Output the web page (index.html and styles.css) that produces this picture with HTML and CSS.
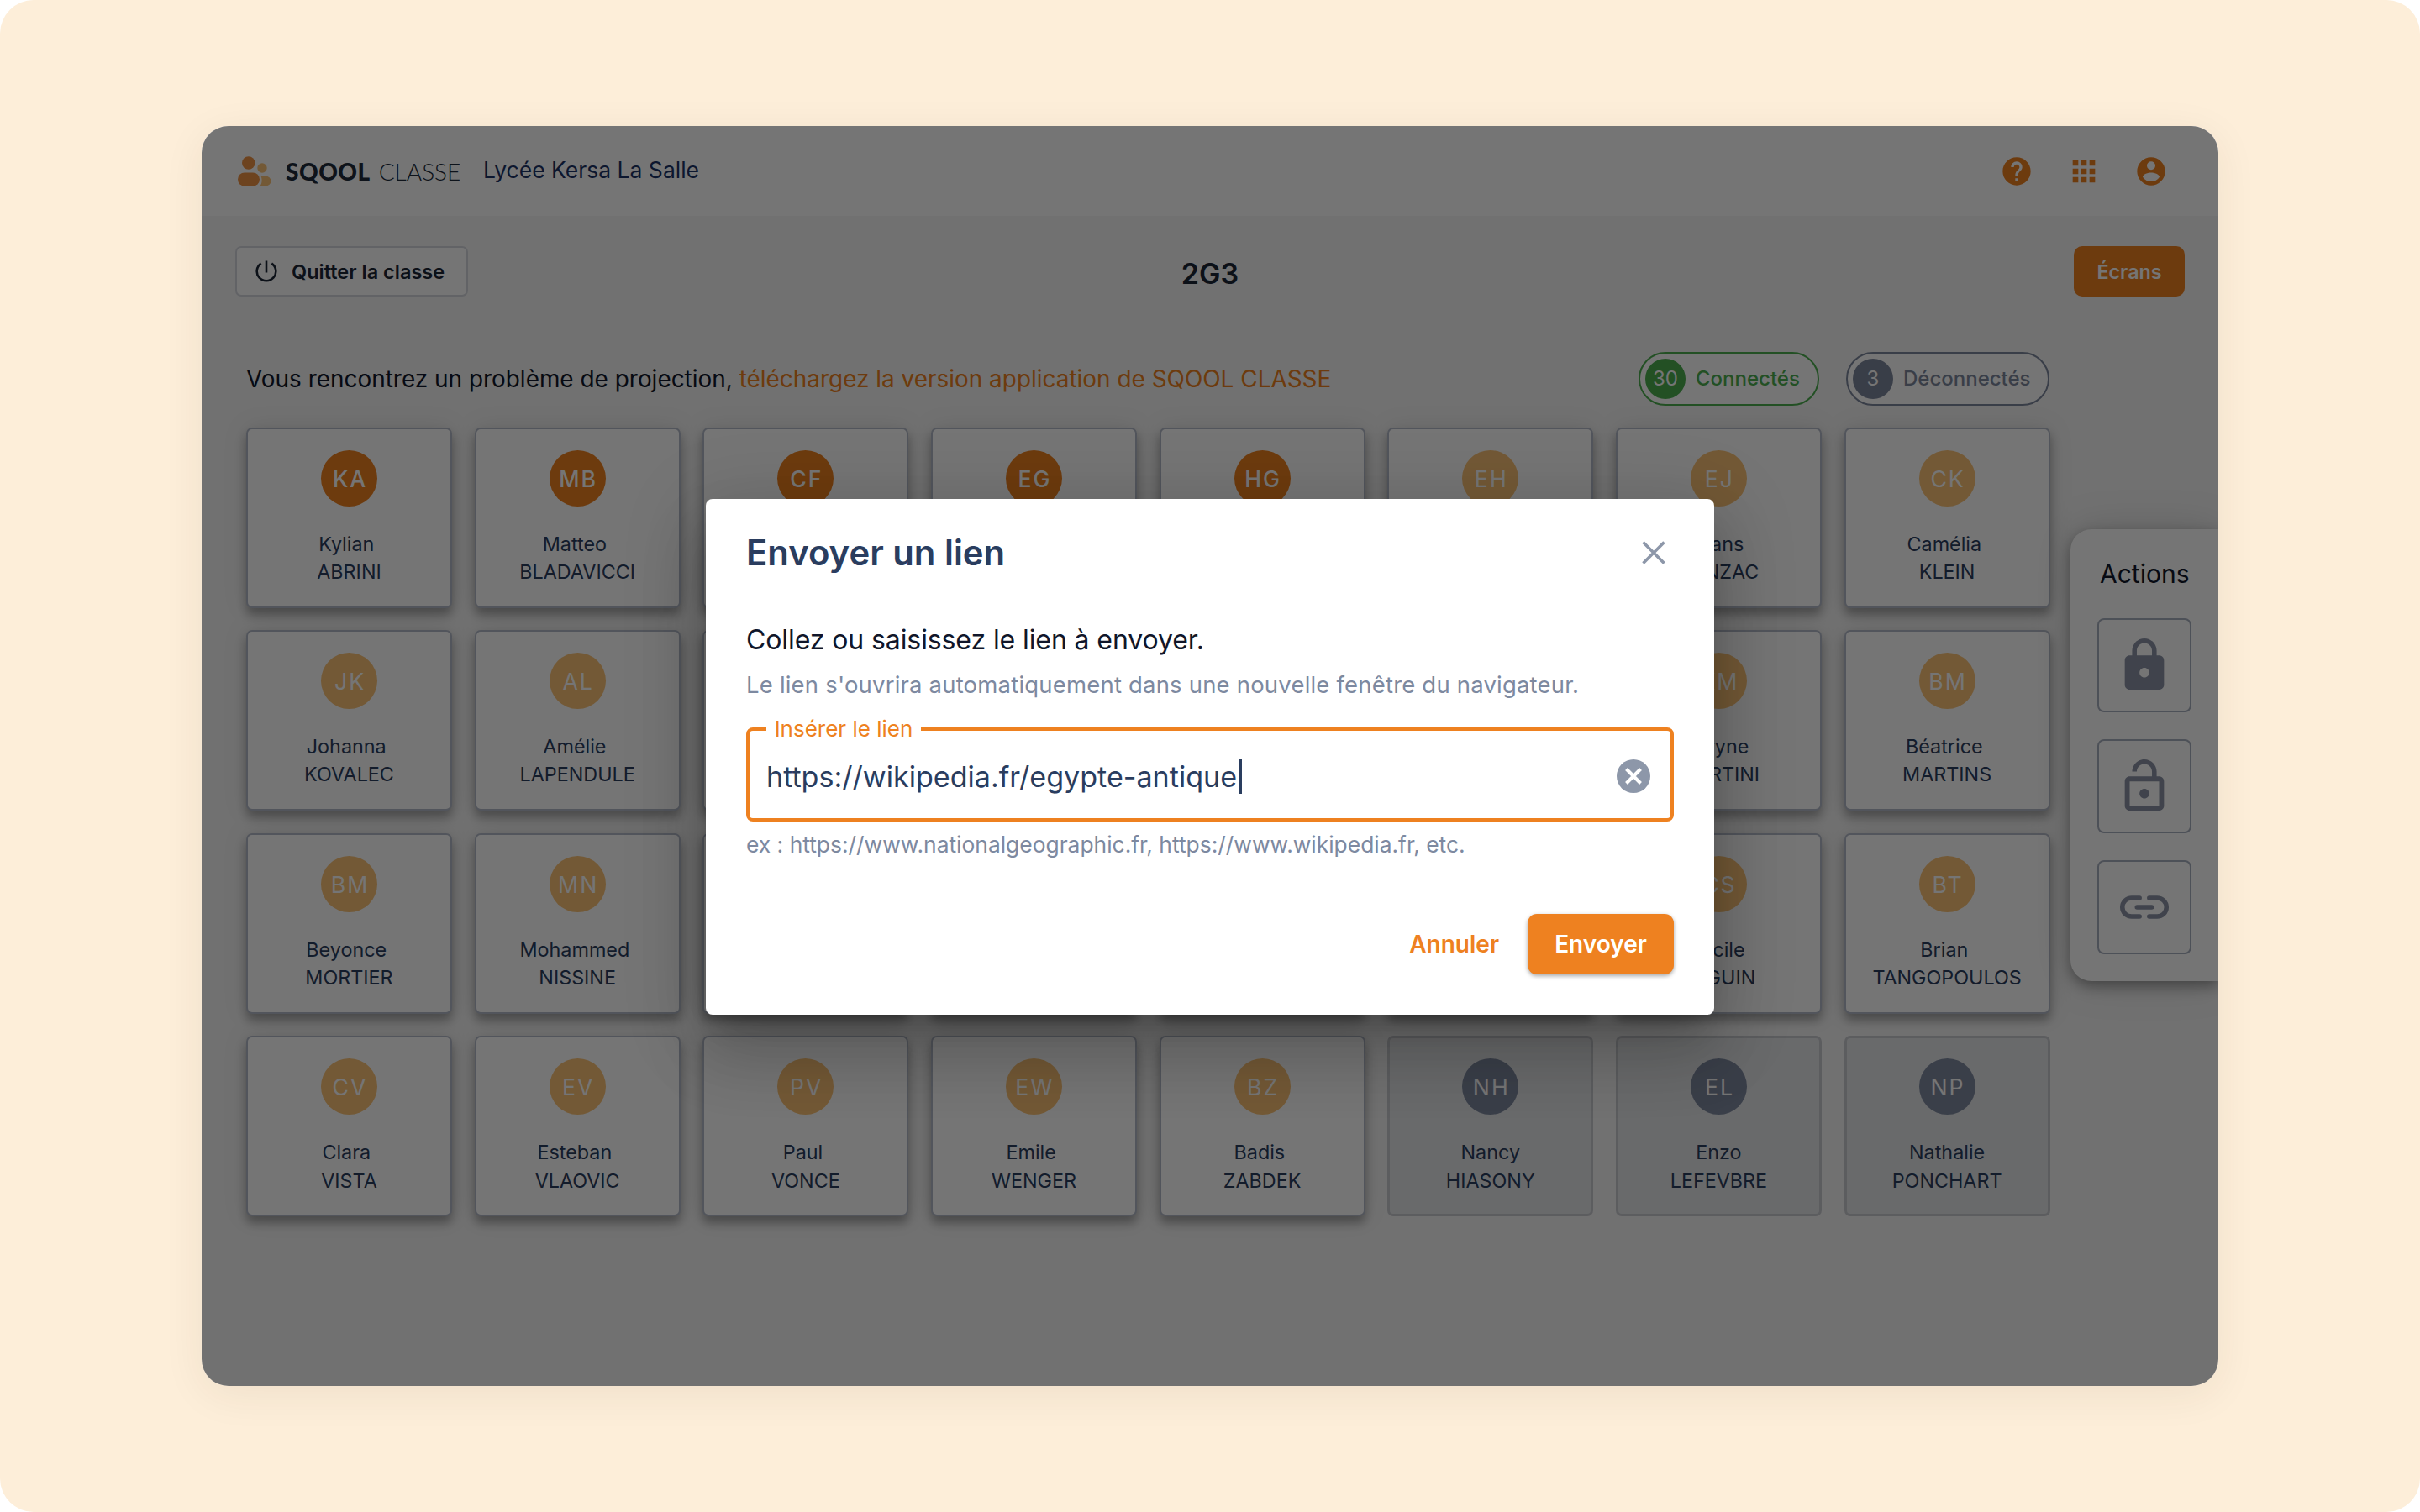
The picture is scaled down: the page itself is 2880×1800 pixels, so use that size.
FILE: index.html
```
<!DOCTYPE html>
<html lang="fr">
<head>
    <meta charset="UTF-8">
    <meta name="viewport" content="width=device-width, initial-scale=1.0">
    <title>SQOOL CLASSE</title>
    <link rel="stylesheet" href="styles.css">
</head>
<body>
    <div class="window">
        <header class="topbar">
            <svg class="logo-icon" viewBox="0 0 40 36">
                <circle cx="12.8" cy="8" r="7.8" fill="#ee9345"/>
                <circle cx="29" cy="14" r="5.7" fill="#fac276"/>
                <path d="M27.500 23.500H33a6.500 6 0 0 1 6.500 6a6.500 6 0 0 1-6.500 6H26.500c1.400-2 2.100-4 2.100-6.500c0-2-.4-4-1.100-5.500z" fill="#fac276"/>
                <rect x="0" y="19.500" width="26" height="16" rx="8" fill="#ee9345"/>
            </svg>
            <div class="logo-text"><b>SQOOL</b> <span>CLASSE</span></div>
            <div class="school">Lycée Kersa La Salle</div>
            <nav class="top-icons">
                <svg viewBox="0 0 24 24"><path d="M12 2C6.480 2 2 6.480 2 12s4.480 10 10 10 10-4.480 10-10S17.520 2 12 2zm1 17h-2v-2h2v2zm2.070-7.750l-.9.920C13.450 12.900 13 13.500 13 15h-2v-.5c0-1.100.45-2.100 1.170-2.830l1.240-1.260c.37-.36.59-.86.59-1.410 0-1.100-.9-2-2-2s-2 .9-2 2H8c0-2.210 1.790-4 4-4s4 1.790 4 4c0 .88-.36 1.680-.93 2.250z"/></svg>
                <svg viewBox="0 0 24 24"><path d="M4 8h4V4H4v4zm6 12h4v-4h-4v4zm-6 0h4v-4H4v4zm0-6h4v-4H4v4zm6 0h4v-4h-4v4zm6-10v4h4V4h-4zm-6 4h4V4h-4v4zm6 6h4v-4h-4v4zm0 6h4v-4h-4v4z"/></svg>
                <svg viewBox="0 0 24 24"><path fill-rule="evenodd" d="M12 2a10 10 0 1 0 0 20a10 10 0 1 0 0-20zM12 5a3 3 0 1 1 0 6a3 3 0 1 1 0-6zM12 19.200c-2.500 0-4.710-1.280-6-3.220.03-1.990 4-3.080 6-3.080s5.970 1.090 6 3.080c-1.290 1.940-3.500 3.220-6 3.220z"/></svg>
            </nav>
        </header>

        <div class="toolbar">
            <button class="btn-quit">
                <svg viewBox="0 0 26 26"><path d="M13 .5v14M6.700 3.600a11.300 11.300 0 1 0 12.600 0" fill="none" stroke="currentColor" stroke-width="2.600"/></svg>
                Quitter la classe
            </button>
            <h1>2G3</h1>
            <button class="btn-screens">Écrans</button>
        </div>

        <div class="content">
            <main class="students">
                <div class="info-row">
                    <p>Vous rencontrez un problème de projection, <a>téléchargez la version application de SQOOL CLASSE</a></p>
                    <div class="pill connected"><i>30</i><span>Connectés</span></div>
                    <div class="pill disconnected"><i>3</i><span>Déconnectés</span></div>
                </div>
                <div class="grid" id="grid"></div>
            </main>
            <aside class="actions">
                <h2>Actions</h2>
                <button>
                    <svg viewBox="0 0 24 24"><path fill-rule="evenodd" d="M18 8h-1V6c0-2.760-2.240-5-5-5S7 3.240 7 6v2H6c-1.100 0-2 .9-2 2v10c0 1.100.9 2 2 2h12c1.100 0 2-.9 2-2V10c0-1.100-.9-2-2-2zM12 17c-1.100 0-2-.9-2-2s.9-2 2-2 2 .9 2 2-.9 2-2 2zM8.900 8V6c0-1.710 1.390-3.100 3.100-3.100s3.100 1.390 3.100 3.100v2z"/></svg>
                </button>
                <button>
                    <svg viewBox="0 0 24 24"><path d="M12 17c1.100 0 2-.9 2-2s-.9-2-2-2-2 .9-2 2 .9 2 2 2zm6-9h-1V6c0-2.760-2.240-5-5-5S7 3.240 7 6h1.900c0-1.710 1.390-3.100 3.100-3.100 1.710 0 3.100 1.390 3.100 3.100v2H6c-1.100 0-2 .9-2 2v10c0 1.100.9 2 2 2h12c1.100 0 2-.9 2-2V10c0-1.100-.9-2-2-2zm0 12H6V10h12v10z"/></svg>
                </button>
                <button>
                    <svg viewBox="0 0 24 24"><path d="M10 8.200H6.800a3.800 3.800 0 0 0 0 7.600H10M14 8.200h3.200a3.800 3.800 0 0 1 0 7.600H14M9 12h6" fill="none" stroke="currentColor" stroke-width="1.900" stroke-linecap="round"/></svg>
                </button>
            </aside>
        </div>

        <div class="overlay">
            <div class="modal">
                <div class="modal-header">
                    <h2>Envoyer un lien</h2>
                    <svg class="close" viewBox="0 0 28 28"><path d="M1.500 1.500l25 25M26.500 1.500l-25 25" stroke="currentColor" stroke-width="3.600"/></svg>
                </div>
                <p class="lead">Collez ou saisissez le lien à envoyer.</p>
                <p class="hint">Le lien s'ouvrira automatiquement dans une nouvelle fenêtre du navigateur.</p>
                <div class="field">
                    <label>Insérer le lien</label>
                    <span class="value">https://wikipedia.fr/egypte-antique</span><span class="caret"></span>
                    <svg class="clear" viewBox="0 0 40 40"><circle cx="20" cy="20" r="20" fill="currentColor"/><path d="M11.500 11.500l17 17M28.500 11.500l-17 17" stroke="#fff" stroke-width="4"/></svg>
                </div>
                <p class="helper">ex : https://www.nationalgeographic.fr, https://www.wikipedia.fr, etc.</p>
                <div class="modal-footer">
                    <button class="btn-cancel">Annuler</button>
                    <button class="btn-send">Envoyer</button>
                </div>
            </div>
        </div>
    </div>
    <script>
        // [initials, first name, last name, state]
        const students = [
            ['KA', 'Kylian', 'ABRINI', 'active'],
            ['MB', 'Matteo', 'BLADAVICCI', 'active'],
            ['CF', '', '', 'active'],
            ['EG', '', '', 'active'],
            ['HG', '', '', 'active'],
            ['EH', '', '', ''],
            ['EJ', 'Evans', 'JONZAC', ''],
            ['CK', 'Camélia', 'KLEIN', ''],
            ['JK', 'Johanna', 'KOVALEC', ''],
            ['AL', 'Amélie', 'LAPENDULE', ''],
            ['', '', '', ''],
            ['', '', '', ''],
            ['', '', '', ''],
            ['', '', '', ''],
            ['KM', 'Karyne', 'MARTINI', ''],
            ['BM', 'Béatrice', 'MARTINS', ''],
            ['BM', 'Beyonce', 'MORTIER', ''],
            ['MN', 'Mohammed', 'NISSINE', ''],
            ['', '', '', ''],
            ['', '', '', ''],
            ['', '', '', ''],
            ['', '', '', ''],
            ['CS', 'Cécile', 'SEGUIN', ''],
            ['BT', 'Brian', 'TANGOPOULOS', ''],
            ['CV', 'Clara', 'VISTA', ''],
            ['EV', 'Esteban', 'VLAOVIC', ''],
            ['PV', 'Paul', 'VONCE', ''],
            ['EW', 'Emile', 'WENGER', ''],
            ['BZ', 'Badis', 'ZABDEK', ''],
            ['NH', 'Nancy', 'HIASONY', 'offline'],
            ['EL', 'Enzo', 'LEFEVBRE', 'offline'],
            ['NP', 'Nathalie', 'PONCHART', 'offline']
        ];

        const grid = document.getElementById('grid');
        students.forEach(([initials, first, last, state]) => {
            const card = document.createElement('div');
            card.className = `card ${state}`;
            const space = state === 'offline' ? '' : '&nbsp;';
            card.innerHTML = `<div class="avatar">${initials}</div><div class="name">${first}${space}<br>${last}</div>`;
            grid.appendChild(card);
        });
    </script>
</body>
</html>
```
FILE: styles.css
```
* {
    box-sizing: border-box;
}
html {
    background: #fff;
}
body {
    margin: 0;
    width: 2880px;
    height: 1800px;
    padding: 150px 240px;
    background: #fdeed9;
    border-radius: 40px;
    font-family: Inter, "Liberation Sans", sans-serif;
    color: #10162a;
    overflow: hidden;
}
h1, h2, p {
    margin: 0;
}
button {
    font-family: inherit;
    border: none;
    padding: 0;
    background: none;
}
svg {
    display: block;
    fill: currentColor;
    flex: none;
}

.window {
    position: relative;
    width: 2400px;
    height: 1500px;
    border-radius: 32px;
    background: #f6f6f6;
    box-shadow: 0 10px 50px rgba(60, 40, 10, 0.07);
    overflow: hidden;
}

/* top bar */
.topbar {
    display: flex;
    align-items: center;
    height: 107px;
    padding: 0 60px 0 43px;
    background: #fff;
}
.logo-icon {
    width: 40px;
    height: 36px;
}
.logo-text {
    display: flex;
    gap: 10px;
    width: 235px;
    margin-left: 17px;
    font-family: Lato, sans-serif;
    font-size: 28px;
    line-height: 36px;
    color: #202b3a;
}
.logo-text b {
    font-weight: 900;
    letter-spacing: 0.5px;
}
.logo-text span {
    font-weight: 300;
}
.school {
    padding-bottom: 3px;
    font-size: 26.5px;
    color: #1c3366;
}
.top-icons {
    display: flex;
    gap: 40px;
    margin-left: auto;
    color: #ee8120;
}
.top-icons svg {
    width: 40px;
    height: 40px;
}

/* toolbar */
.toolbar {
    display: grid;
    grid-template-columns: 1fr auto 1fr;
    align-items: center;
    height: 60px;
    margin: 36px 40px 0;
}
.btn-quit {
    display: flex;
    align-items: center;
    gap: 17px;
    width: 277px;
    height: 60px;
    padding-left: 22px;
    border: 2px solid #d5d7de;
    border-radius: 7px;
    background: #fff;
    font-size: 23.5px;
    font-weight: 600;
    color: #1c2536;
}
.btn-quit svg {
    width: 26px;
    height: 26px;
}
.toolbar h1 {
    padding-top: 4px;
    font-size: 34px;
    font-weight: 600;
    color: #1c2536;
}
.btn-screens {
    justify-self: end;
    width: 132px;
    height: 60px;
    border-radius: 10px;
    background: #ee8120;
    font-size: 23.33px;
    font-weight: 600;
    color: #fff;
}

/* students */
.content {
    display: flex;
    justify-content: space-between;
    align-items: flex-start;
}
.students {
    width: 2146px;
    margin: 66px 0 0 53px;
}
.info-row {
    display: flex;
    align-items: center;
    height: 64px;
    margin-bottom: 25.5px;
}
.info-row p {
    margin-right: auto;
    font-size: 27.93px;
}
.info-row a {
    color: #ee8120;
}
.pill {
    display: flex;
    align-items: center;
    height: 64px;
    margin-top: -1px;
    padding: 0 20px 0 6px;
    border: 2.5px solid;
    border-radius: 32px;
    background: #fff;
    font-size: 24px;
    font-weight: 500;
}
.pill i {
    width: 48px;
    height: 48px;
    margin-right: 12px;
    border-radius: 50%;
    background: #4caf50;
    color: #fff;
    font-style: normal;
    font-weight: 400;
    line-height: 48px;
    text-align: center;
}
.pill.connected {
    width: 215px;
    color: #4caf50;
}
.pill.disconnected {
    width: 242px;
    margin-left: 32px;
    color: #7d879d;
}
.pill.disconnected i {
    background: #7d879d;
}
.grid {
    display: grid;
    grid-template-columns: repeat(8, 245px);
    grid-auto-rows: 215px;
    gap: 26.6px 26.67px;
}
.card {
    padding-top: 25px;
    border: 2px solid #b4bac8;
    border-radius: 7px;
    background: #fff;
    box-shadow: 0 8px 12px rgba(0, 0, 0, 0.3), 0 0 30px rgba(0, 0, 0, 0.1);
    text-align: center;
}
.avatar {
    width: 67px;
    height: 67px;
    margin: 0 auto 28px;
    border-radius: 50%;
    background: #fac276;
    font-size: 26.67px;
    font-weight: 400;
    letter-spacing: 2px;
    line-height: 69px;
    text-indent: 2px;
    color: #fff;
}
.name {
    font-size: 23.33px;
    line-height: 33.33px;
    color: #2a3d5f;
}
.card.active .avatar {
    background: #ee8120;
    font-weight: 500;
}
.card.offline {
    padding-top: 24px;
    border: 3px solid #c9cad0;
    background: #e5e7ea;
    box-shadow: none;
}
.card.offline .avatar {
    background: #7f8aa0;
}

/* actions panel */
.actions {
    display: flex;
    flex-direction: column;
    align-items: flex-start;
    gap: 32px;
    width: 176px;
    height: 538px;
    margin-top: 277px;
    padding: 32px;
    border-radius: 25px 0 0 25px;
    background: #fff;
    box-shadow: 0 6px 16px rgba(0, 0, 0, 0.35), 0 0 50px rgba(0, 0, 0, 0.15);
}
.actions h2 {
    padding-left: 3px;
    font-size: 30px;
    font-weight: 400;
    line-height: 42px;
}
.actions button {
    display: flex;
    align-items: center;
    justify-content: center;
    width: 112px;
    height: 112px;
    border: 2px solid #a9b1c0;
    border-radius: 8px;
    color: #8b93a5;
}
.actions svg {
    width: 70px;
    height: 70px;
}

/* modal */
.overlay {
    position: absolute;
    inset: 0;
    background: rgba(0, 0, 0, 0.54);
}
.modal {
    width: 1200px;
    height: 614px;
    margin: 444px auto 0;
    padding: 41px 48px 48px;
    border-radius: 8px;
    background: #fff;
    box-shadow: 0 22px 30px -14px rgba(0, 0, 0, 0.2), 0 48px 76px 6px rgba(0, 0, 0, 0.14), 0 18px 92px 16px rgba(0, 0, 0, 0.12);
}
.modal-header {
    display: flex;
    align-items: center;
    justify-content: space-between;
    height: 46px;
    padding-right: 10px;
}
.modal-header h2 {
    font-size: 41.8px;
    font-weight: 600;
    color: #2a3d5f;
}
.close {
    width: 28px;
    height: 28px;
    color: #8d97a9;
}
.lead {
    margin-top: 60px;
    font-size: 32px;
    letter-spacing: -0.1px;
    line-height: 42px;
}
.hint {
    margin-top: 14px;
    font-size: 27.5px;
    letter-spacing: 0.19px;
    line-height: 36px;
    color: #7d89a0;
}
.field {
    position: relative;
    display: flex;
    align-items: center;
    height: 112px;
    margin-top: 33px;
    padding: 4px 24px 0 20px;
    border: 4px solid #ee8120;
    border-radius: 8px;
}
.field label {
    position: absolute;
    top: -20px;
    left: 20px;
    width: 184px;
    background: #fff;
    font-size: 26px;
    line-height: 36px;
    text-align: center;
    color: #ee8120;
}
.value {
    font-size: 34.1px;
    color: #2a3d5f;
}
.caret {
    width: 3px;
    height: 42px;
    margin-left: 3px;
    background: #2a3d5f;
}
.clear {
    width: 40px;
    height: 40px;
    margin-left: auto;
    color: #8d97a9;
}
.helper {
    margin-top: 9px;
    font-size: 26.4px;
    line-height: 36px;
    color: #7d89a0;
}
.modal-footer {
    display: flex;
    justify-content: flex-end;
    align-items: center;
    gap: 34px;
    margin-top: 65px;
}
.btn-cancel {
    font-size: 28px;
    font-weight: 600;
    color: #ee8120;
}
.btn-send {
    width: 174px;
    height: 72px;
    border-radius: 11px;
    background: #ee8120;
    box-shadow: 0 2px 5px rgba(0, 0, 0, 0.35);
    font-size: 28px;
    font-weight: 600;
    color: #fff;
}
```
